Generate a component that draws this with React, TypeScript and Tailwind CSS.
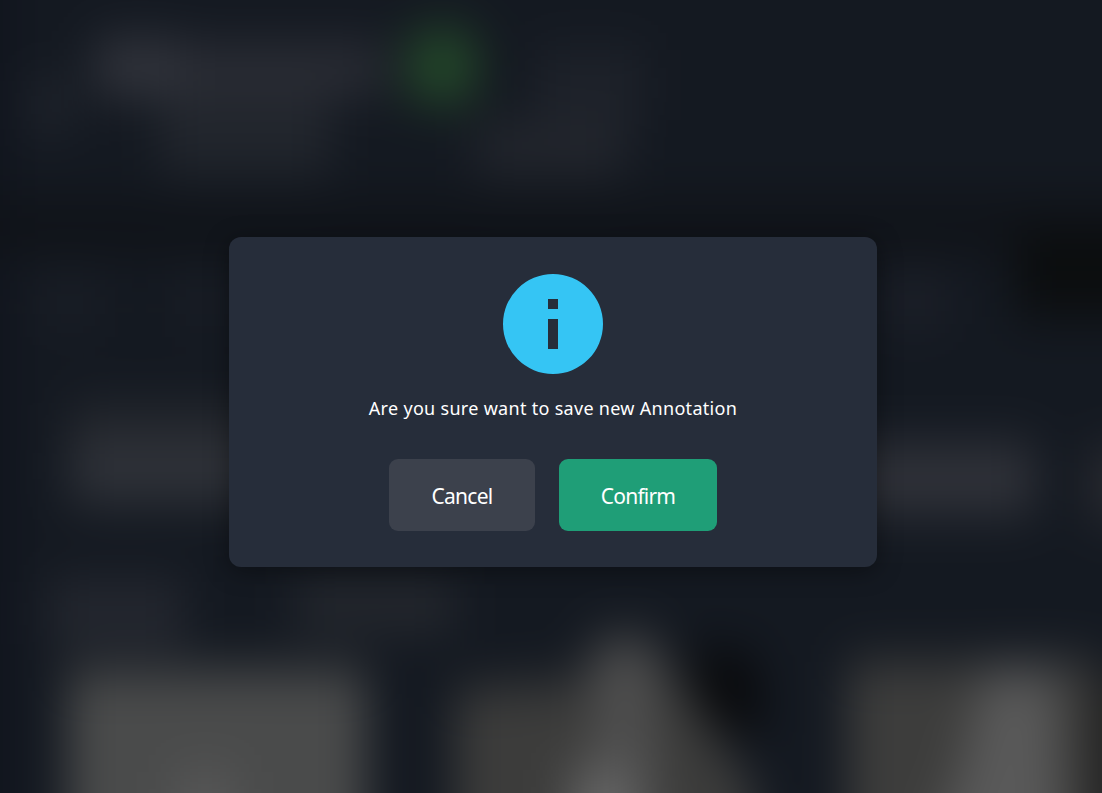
import React from "react";

function Backdrop() {
  return (
    <svg
      aria-hidden="true"
      className="absolute inset-0 h-full w-full"
      viewBox="0 0 1102 793"
      preserveAspectRatio="none"
    >
      <defs>
        <filter
          id="soft"
          filterUnits="userSpaceOnUse"
          x="-150"
          y="-150"
          width="1402"
          height="1093"
          colorInterpolationFilters="sRGB"
        >
          <feGaussianBlur stdDeviation="23 26" />
        </filter>
      </defs>
      <rect width="1102" height="793" fill="#141920" />
      <g filter="url(#soft)">
        <rect x="-150" y="-150" width="1402" height="1093" fill="#141921" />
        <rect x="-150" y="-60" width="160" height="1003" fill="#10141d" />
        <rect x="-150" y="203" width="1402" height="48" fill="#0f1217" />
        <rect x="1015" y="232" width="180" height="85" fill="#0b0d0e" />
        <rect x="95" y="42" width="85" height="50" fill="#363840" />
        <rect x="180" y="46" width="205" height="45" fill="#2d2f37" />
        <rect x="30" y="80" width="40" height="50" fill="#22262e" />
        <rect x="160" y="95" width="170" height="78" fill="#22262d" />
        <rect x="406" y="32" width="72" height="68" rx="20" fill="#244a2a" />
        <rect x="535" y="50" width="110" height="70" fill="#1e222a" />
        <rect x="475" y="125" width="150" height="48" fill="#24272e" />
        <rect x="40" y="280" width="60" height="40" fill="#1b1f27" />
        <rect x="180" y="280" width="50" height="40" fill="#1b1f27" />
        <rect x="885" y="275" width="60" height="50" fill="#1d2029" />
        <rect x="70" y="405" width="260" height="102" fill="#25282e" />
        <rect x="70" y="448" width="240" height="48" fill="#31343b" />
        <rect x="820" y="445" width="215" height="68" fill="#31333a" />
        <rect x="1090" y="450" width="80" height="70" fill="#2b2c32" />
        <rect x="50" y="582" width="135" height="62" fill="#252830" />
        <rect x="295" y="582" width="160" height="48" fill="#26292f" />
        <rect x="68" y="670" width="298" height="280" fill="#4a4b4b" />
        <rect x="175" y="772" width="60" height="180" fill="#585858" />
        <polygon points="455,690 580,680 600,640 655,645 755,793 755,943 455,943" fill="#3c3c3b" />
        <polygon points="595,640 655,640 658,943 570,943 590,760" fill="#4e4e4e" />
        <rect x="570" y="770" width="65" height="160" fill="#666666" />
        <polygon points="682,650 755,655 765,735 710,725" fill="#08090b" />
        <rect x="848" y="662" width="255" height="283" fill="#3d3d3c" />
        <polygon points="985,670 1055,670 1065,943 890,943 960,770" fill="#595959" />
        <rect x="1090" y="680" width="160" height="260" fill="#222222" />
      </g>
    </svg>
  );
}

function InfoIcon() {
  return (
    <svg className="block size-[100px]" viewBox="0 0 20 20" fill="#35c5f4">
      <path
        fillRule="evenodd"
        d="M10 0a10 10 0 1 0 0 20a10 10 0 0 0 0-20zM9 5h2v2H9zM9 9h2v6H9z"
      />
    </svg>
  );
}

export default function App() {
  return (
    <main className="relative h-[793px] w-full overflow-hidden bg-[#141920] font-['Noto_Sans',sans-serif]">
      <Backdrop />
      <div className="relative flex justify-center pt-[237px] pl-1">
        <section
          role="dialog"
          aria-modal="true"
          className="flex h-[330px] w-[648px] flex-col items-center rounded-xl bg-[#262d3a] pt-[37px] text-white shadow-[0_4px_24px_rgba(0,0,0,0.4)]"
        >
          <InfoIcon />
          <p className="mt-5 text-[18px] leading-7 tracking-[0.3px] whitespace-nowrap">
            Are you sure want to save new Annotation
          </p>
          <div className="mt-[37px] flex gap-6">
            <button className="h-[72px] w-[146px] rounded-[9px] bg-[#3c414c] pt-[3px] text-[21px] tracking-[-0.7px]">
              Cancel
            </button>
            <button className="h-[72px] w-[158px] rounded-[9px] bg-[#1f9e77] pt-[3px] text-[21px] tracking-[-0.8px]">
              Confirm
            </button>
          </div>
        </section>
      </div>
    </main>
  );
}
